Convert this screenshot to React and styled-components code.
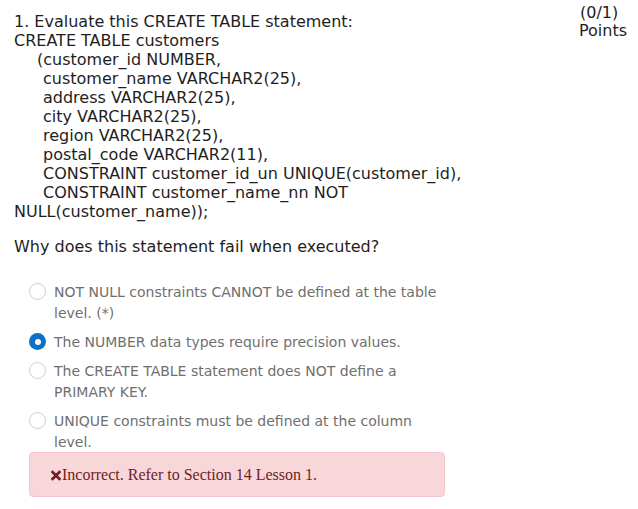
import styled, { createGlobalStyle } from "styled-components"
import { FaTimes } from "react-icons/fa"

const Global = createGlobalStyle`
  body{
    margin:0;
    background:#fff;
    font-family:"DejaVu Sans", Verdana, sans-serif;
    color:#1e1e1e;
  }
`

const Page = styled.div`
  display:flex;
  align-items:flex-start;
  padding:0 11px 0 14px;
  width:638px;
  box-sizing:border-box;
`
const Main = styled.div`
  flex:1;
  padding-top:12px;
  font-size:16px;
  line-height:19px;
`
const Score = styled.div`
  width:48px;
  padding-top:4px;
  font-size:16px;
  line-height:18px;
  div:first-child{
    padding-left:1px;
  }
`
const CodeLine = styled.div`
  padding-left:${p => p.indent || 0}px;
  white-space:pre;
`
const Question = styled.div`
  margin-top:16px;
`
const Options = styled.div`
  margin-top:26px;
  margin-left:15px;
  width:416px;
`
const Option = styled.div`
  display:flex;
  align-items:flex-start;
  gap:8px;
  margin-bottom:8px;
  font-size:14px;
  line-height:21px;
  color:#6f6f6f;
`
const Radio = styled.span`
  flex:none;
  width:17px;
  height:17px;
  margin-top:1px;
  border-radius:50%;
  box-sizing:border-box;
  border:${p => p.checked ? "none" : "1px solid #cfcfcf"};
  background:${p => p.checked ? "#0e6fc6" : "#fff"};
  display:flex;
  align-items:center;
  justify-content:center;
  &::after{
    content:"";
    display:${p => p.checked ? "block" : "none"};
    width:6px;
    height:6px;
    border-radius:50%;
    background:#fff;
  }
`
const Feedback = styled.div`
  margin-top:-9px;
  height:45px;
  box-sizing:border-box;
  display:flex;
  align-items:center;
  padding:0 20px 0 21px;
  background:#f8d7da;
  border:1px solid #f5c6cb;
  border-radius:4px;
  color:#721c24;
  font-family:"Liberation Serif", "Times New Roman", serif;
  font-size:16px;
  svg{
    width:10px;
    height:15px;
    margin-top:1px;
    margin-right:1px;
  }
`

const code = [
  [0, "CREATE TABLE customers"],
  [23, "(customer_id NUMBER,"],
  [29, "customer_name VARCHAR2(25),"],
  [29, "address VARCHAR2(25),"],
  [29, "city VARCHAR2(25),"],
  [29, "region VARCHAR2(25),"],
  [29, "postal_code VARCHAR2(11),"],
  [29, "CONSTRAINT customer_id_un UNIQUE(customer_id),"],
  [29, "CONSTRAINT customer_name_nn NOT"],
  [0, "NULL(customer_name));"],
]

const answers = [
  {text:"NOT NULL constraints CANNOT be defined at the table level. (*)"},
  {text:"The NUMBER data types require precision values.", checked:true},
  {text:"The CREATE TABLE statement does NOT define a PRIMARY KEY."},
  {text:"UNIQUE constraints must be defined at the column level."},
]

const App = () => {
  return(
    <Page>
      <Global />
      <Main>
        <div>1. Evaluate this CREATE TABLE statement:</div>
        {code.map(([indent, line], i) => (
          <CodeLine key={i} indent={indent}>{line}</CodeLine>
        ))}
        <Question>Why does this statement fail when executed?</Question>
        <Options>
          {answers.map((a, i) => (
            <Option key={i}>
              <Radio checked={a.checked} />
              <span>{a.text}</span>
            </Option>
          ))}
          <Feedback>
            <FaTimes />
            <span>Incorrect. Refer to Section 14 Lesson 1.</span>
          </Feedback>
        </Options>
      </Main>
      <Score>
        <div>(0/1)</div>
        <div>Points</div>
      </Score>
    </Page>
  )
}
export default App;
